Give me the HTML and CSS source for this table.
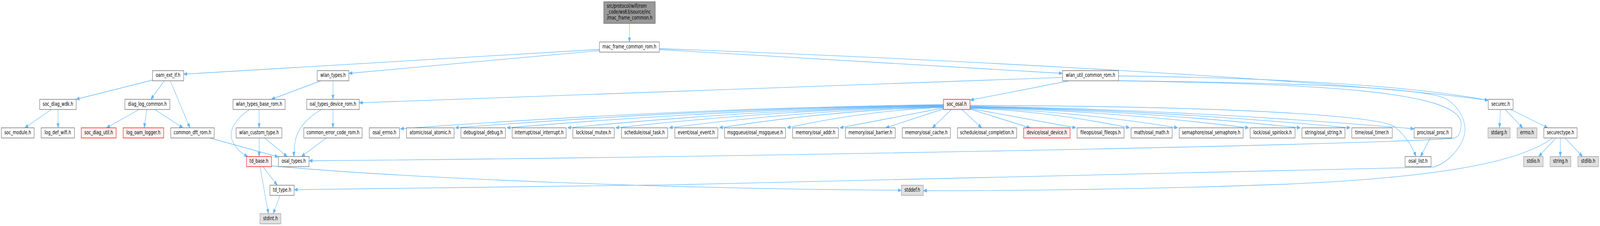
FILE: index.html
```html
<!DOCTYPE html>
<html lang="en">
<head>
<meta charset="utf-8">
<title>mac_frame_common.h include graph</title>
<link rel="stylesheet" href="styles.css">
</head>
<body>
<div class="graph">
<svg class="canvas" viewBox="0 0 5483 579" preserveAspectRatio="none" xmlns="http://www.w3.org/2000/svg">
  <defs>
    <marker id="arr" viewBox="0 0 12 9" refX="12" refY="4.5" markerWidth="12" markerHeight="9" markerUnits="userSpaceOnUse" orient="auto">
      <path class="arrowhead" d="M0,0 L12,4.5 L0,9 Z"/>
    </marker>
  </defs>

  <g class="edges">
    <path d="M2157,60 L2157,107.5"/>
    <path d="M2054.5,126.5 L629.5,190"/>
    <path d="M2054.5,129.5 L1195.5,188"/>
    <path d="M2259.5,127 L3641,188"/>
    <path d="M2259.5,124.5 C3200,150 4600,205 5100,257"/>
    <path d="M3833,194.5 C4300,199 4800,215 5100,257"/>
    <path d="M3833,207 C4500,215 5010,232 5007,318 C5006,342 4998,351 4983,354 C4700,371 2600,402 1059,412"/>
    <path d="M3833,207 C4400,212 4900,222 4962,256 C5020,288 5030,330 5012,360 C4990,395 4950,420 4913,428 C4750,442 2500,475 1008,486"/>
    <path d="M3661,207.5 L3325,256.5"/>
    <path d="M3641,198.3 L1231,263.3"/>
    <path d="M522.8,205 L260.4,254.5"/>
    <path d="M563,207 L517,254.5"/>
    <path d="M583.5,207 L650.7,327.5"/>
    <path d="M176,280.5 L85,327.5"/>
    <path d="M199,280.5 L199,327.5"/>
    <path d="M477,280.5 L365,327.5"/>
    <path d="M503,280.5 L494,327.5"/>
    <path d="M530.6,280.5 L627,327.5"/>
    <path d="M718.75,353.5 L954,402"/>
    <path d="M1099.5,207 L930,254.5"/>
    <path d="M1141,207 L1141,254.5"/>
    <path d="M855,280.5 C815,300 782,330 795,358 C805,378 825,392 849,401"/>
    <path d="M888,280.5 L888,327.5"/>
    <path d="M888,353.5 L888,401"/>
    <path d="M906.5,353.5 L984,401"/>
    <path d="M1102,280.5 C1055,300 1020,330 1012,360 C1008,380 1007,390 1007,401"/>
    <path d="M1141,280.5 L1141,327.5"/>
    <path d="M1118,353.5 L1033,401"/>
    <path d="M901,427 L950,474.5"/>
    <path d="M891,427 L920,547.5"/>
    <path d="M960,500.5 L936,547.5"/>
    <path d="M931,425 C1400,457 2300,484 3089,487.5"/>
    <path d="M5321,353.5 C5200,420 4900,456 4400,472 C3900,486 3400,489 3164,488.5"/>
    <path d="M5141.7,280.5 L5138.7,327.5"/>
    <path d="M5158,280.5 L5218,327.5"/>
    <path d="M5176.7,280.5 L5304,327.5"/>
    <path d="M5332,353.5 L5273,401"/>
    <path d="M5347,353.5 L5347,401"/>
    <path d="M5363,353.5 L5423,401"/>
    <path d="M4901.7,353.5 L4868,401"/>
    <path d="M3324,270 C4200,272 4720,295 4780,325 C4820,350 4843,380 4852,401"/>
    <!-- soc_osal.h fan, left -->
    <path d="M3233,268 c-614,6.2 -1247,27.9 -1861,62"/>
    <path d="M3233,269 c-552,5.9 -1121,26.3 -1673,58.5"/>
    <path d="M3233,270 c-494,5.8 -1002,25.9 -1496,57.5"/>
    <path d="M3233,271 c-425,5.7 -863,25.4 -1288,56.5"/>
    <path d="M3233,272 c-371,5.6 -752,25 -1123,55.5"/>
    <path d="M3233,273 c-310,5.5 -630,24.5 -940,54.5"/>
    <path d="M3233,274 c-253,5.4 -515,24.1 -768,53.5"/>
    <path d="M3233,275 c-177,5.3 -359,23.6 -536,52.5"/>
    <path d="M3233,276.5 L2878,327.5"/>
    <path d="M3233,279 L3035,327.5"/>
    <path d="M3260.7,280.5 L3195,327.5"/>
    <path d="M3296,280.5 L3364,327.5"/>
    <!-- soc_osal.h fan, right -->
    <path d="M3324,279.5 L3530,327.5"/>
    <path d="M3324,278 L3687,327.5"/>
    <path d="M3324,277 c181,5 366,22.7 547,50.5"/>
    <path d="M3324,276 c235,5.2 477,23.2 712,51.5"/>
    <path d="M3324,275 c315,5.3 640,23.6 955,52.5"/>
    <path d="M3324,274 c374,5.4 758,24.1 1132,53.5"/>
    <path d="M3324,273 c430,5.5 873,24.5 1303,54.5"/>
    <path d="M3324,272 c502,5.8 1020,26.1 1522,58"/>
  </g>

  <g class="nodes">
    <g class="node root">
      <rect x="2069" y="4.5" width="176.5" height="55.5"/>
      <text class="left" x="2079.5" y="20.5">src/protocol/wifi/rom</text>
      <text class="left" x="2079.5" y="35.5">_code/ws63/source/inc</text>
      <text class="left" x="2079.5" y="50.5">/mac_frame_common.h</text>
    </g>

    <g class="node"><rect x="2054.5" y="107.5" width="205" height="26"/><text x="2157" y="124">mac_frame_common_rom.h</text></g>

    <g class="node"><rect x="522.5" y="181" width="107" height="26"/><text x="576" y="197.5">oam_ext_if.h</text></g>
    <g class="node"><rect x="1087" y="181" width="108.5" height="26"/><text x="1141.25" y="197.5">wlan_types.h</text></g>
    <g class="node"><rect x="3641" y="181" width="192" height="26"/><text x="3737" y="197.5">wlan_util_common_rom.h</text></g>

    <g class="node"><rect x="136" y="254.5" width="125" height="26"/><text x="198.5" y="271">soc_diag_wdk.h</text></g>
    <g class="node"><rect x="428" y="254.5" width="154" height="26"/><text x="505" y="271">diag_log_common.h</text></g>
    <g class="node"><rect x="798.5" y="254.5" width="178.5" height="26"/><text x="887.75" y="271">wlan_types_base_rom.h</text></g>
    <g class="node"><rect x="1051" y="254.5" width="180" height="26"/><text x="1141" y="271">oal_types_device_rom.h</text></g>
    <g class="node red"><rect x="3233" y="254.5" width="91" height="26"/><text x="3278.5" y="271">soc_osal.h</text></g>
    <g class="node"><rect x="5100" y="254.5" width="85" height="26"/><text x="5142.5" y="271">securec.h</text></g>

    <g class="node"><rect x="4.5" y="327.5" width="112.5" height="26"/><text x="60.75" y="344">soc_module.h</text></g>
    <g class="node"><rect x="141" y="327.5" width="114" height="26"/><text x="198" y="344">log_def_wifi.h</text></g>
    <g class="node red"><rect x="278.5" y="327.5" width="119.5" height="26"/><text x="338.25" y="344">soc_diag_util.h</text></g>
    <g class="node red"><rect x="422" y="327.5" width="139" height="26"/><text x="491.5" y="344">log_oam_logger.h</text></g>
    <g class="node"><rect x="585" y="327.5" width="149" height="26"/><text x="659.5" y="344">common_dft_rom.h</text></g>
    <g class="node"><rect x="809" y="327.5" width="157" height="26"/><text x="887.5" y="344">wlan_custom_type.h</text></g>
    <g class="node"><rect x="1041" y="327.5" width="200" height="26"/><text x="1141" y="344">common_error_code_rom.h</text></g>
    <g class="node"><rect x="1265.5" y="327.5" width="103.5" height="26"/><text x="1317.25" y="344">osal_errno.h</text></g>
    <g class="node"><rect x="1393" y="327.5" width="163" height="26"/><text x="1474.5" y="344">atomic/osal_atomic.h</text></g>
    <g class="node"><rect x="1579.5" y="327.5" width="152.5" height="26"/><text x="1655.75" y="344">debug/osal_debug.h</text></g>
    <g class="node"><rect x="1755" y="327.5" width="185" height="26"/><text x="1847.5" y="344">interrupt/osal_interrupt.h</text></g>
    <g class="node"><rect x="1963" y="327.5" width="142" height="26"/><text x="2034" y="344">lock/osal_mutex.h</text></g>
    <g class="node"><rect x="2129.5" y="327.5" width="158.5" height="26"/><text x="2208.75" y="344">schedule/osal_task.h</text></g>
    <g class="node"><rect x="2312.5" y="327.5" width="147.5" height="26"/><text x="2386.25" y="344">event/osal_event.h</text></g>
    <g class="node"><rect x="2483" y="327.5" width="209" height="26"/><text x="2587.5" y="344">msgqueue/osal_msgqueue.h</text></g>
    <g class="node"><rect x="2716" y="327.5" width="157" height="26"/><text x="2794.5" y="344">memory/osal_addr.h</text></g>
    <g class="node"><rect x="2897" y="327.5" width="171" height="26"/><text x="2982.5" y="344">memory/osal_barrier.h</text></g>
    <g class="node"><rect x="3092" y="327.5" width="165" height="26"/><text x="3174.5" y="344">memory/osal_cache.h</text></g>
    <g class="node"><rect x="3281" y="327.5" width="203" height="26"/><text x="3382.5" y="344">schedule/osal_completion.h</text></g>
    <g class="node red"><rect x="3508" y="327.5" width="159" height="26"/><text x="3587.5" y="344">device/osal_device.h</text></g>
    <g class="node"><rect x="3691" y="327.5" width="161" height="26"/><text x="3771.5" y="344">fileops/osal_fileops.h</text></g>
    <g class="node"><rect x="3876" y="327.5" width="141" height="26"/><text x="3946.5" y="344">math/osal_math.h</text></g>
    <g class="node"><rect x="4041" y="327.5" width="219" height="26"/><text x="4150.5" y="344">semaphore/osal_semaphore.h</text></g>
    <g class="node"><rect x="4284" y="327.5" width="154" height="26"/><text x="4361" y="344">lock/osal_spinlock.h</text></g>
    <g class="node"><rect x="4461.5" y="327.5" width="147.5" height="26"/><text x="4535.25" y="344">string/osal_string.h</text></g>
    <g class="node"><rect x="4632.5" y="327.5" width="138.5" height="26"/><text x="4701.75" y="344">time/osal_timer.h</text></g>
    <g class="node"><rect x="4846" y="327.5" width="129" height="26"/><text x="4910.5" y="344">proc/osal_proc.h</text></g>
    <g class="node sys"><rect x="5099" y="327.5" width="76" height="26"/><text x="5137" y="344">stdarg.h</text></g>
    <g class="node sys"><rect x="5199" y="327.5" width="68" height="26"/><text x="5233" y="344">errno.h</text></g>
    <g class="node"><rect x="5290.5" y="327.5" width="114" height="26"/><text x="5347.5" y="344">securectype.h</text></g>

    <g class="node red"><rect x="844.5" y="401" width="86" height="26"/><text x="887.5" y="417.5">td_base.h</text></g>
    <g class="node"><rect x="954" y="401" width="105" height="26"/><text x="1006.5" y="417.5">osal_types.h</text></g>
    <g class="node"><rect x="4815" y="401" width="89" height="26"/><text x="4859.5" y="417.5">osal_list.h</text></g>
    <g class="node sys"><rect x="5221" y="401" width="67" height="26"/><text x="5254.5" y="417.5">stdio.h</text></g>
    <g class="node sys"><rect x="5312" y="401" width="71" height="26"/><text x="5347.5" y="417.5">string.h</text></g>
    <g class="node sys"><rect x="5407" y="401" width="71" height="26"/><text x="5442.5" y="417.5">stdlib.h</text></g>

    <g class="node"><rect x="925" y="474.5" width="83" height="26"/><text x="966.5" y="491">td_type.h</text></g>
    <g class="node sys"><rect x="3089" y="474.5" width="75" height="26"/><text x="3126.5" y="491">stddef.h</text></g>

    <g class="node sys"><rect x="891" y="547.5" width="71.5" height="26"/><text x="926.75" y="564">stdint.h</text></g>
  </g>
</svg>
</div>
</body>
</html>
```
FILE: styles.css
```css
html, body {
  margin: 0;
  padding: 0;
  background: #ffffff;
  overflow: hidden;
}

.graph {
  width: 100vw;
  height: 100vh;
  overflow: hidden;
}

.canvas {
  display: block;
  width: 100vw;
  height: 100vh;
  font-family: "DejaVu Sans", "Liberation Sans", sans-serif;
  font-size: 13.33px;
}

.edges path {
  fill: none;
  stroke: #63b8ff;
  stroke-width: 1.33;
  marker-end: url(#arr);
}

.arrowhead {
  fill: #63b8ff;
  stroke: #63b8ff;
  stroke-width: 1;
  stroke-linejoin: miter;
}

.node rect {
  fill: #ffffff;
  stroke: #666666;
  stroke-width: 1.33;
}

.node text {
  fill: #000000;
  text-anchor: middle;
}

.node text.left {
  text-anchor: start;
}

.node.root rect {
  fill: #999999;
  stroke: #666666;
}

.node.red rect {
  fill: #fff0f0;
  stroke: #ff0000;
}

.node.sys rect {
  fill: #e0e0e0;
  stroke: #999999;
}
```
